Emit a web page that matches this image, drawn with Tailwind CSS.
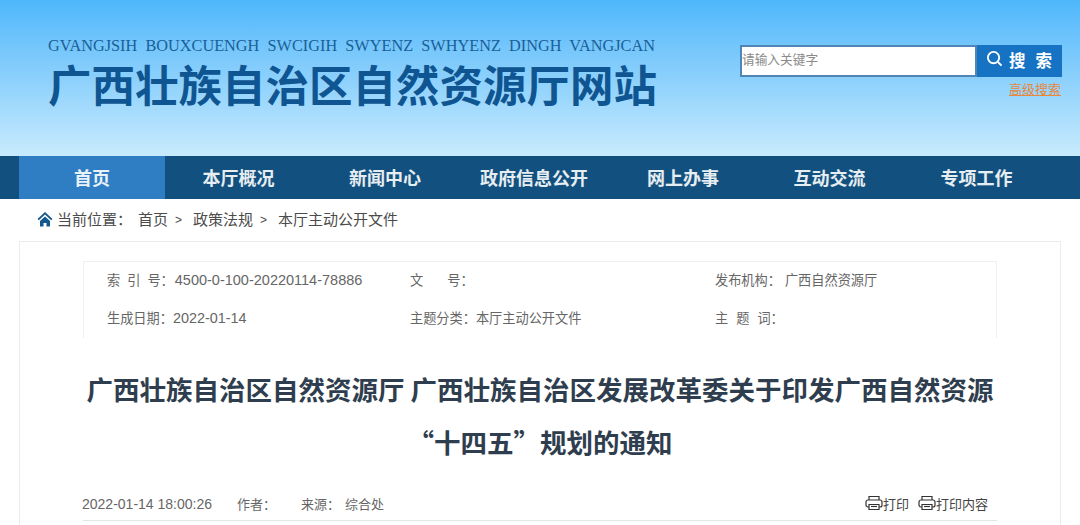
<!DOCTYPE html>
<html lang="zh-CN">
<head>
    <meta charset="UTF-8">
    <title>广西壮族自治区自然资源厅网站</title>
    <script src="https://cdn.jsdelivr.net/npm/@tailwindcss/browser@4"></script>
</head>
<body class="bg-white h-[525px] overflow-hidden font-['Liberation_Sans','Noto_Sans_CJK_SC',sans-serif]">

<!-- Banner -->
<header class="h-[156px] bg-gradient-to-b from-[#4db7fb] via-[#8bd0fc] to-[#c8ebfd] flex justify-between pl-[48px] pr-[19px]">
    <div class="pt-[37px]">
        <p class="w-[610px] h-[17px] leading-[17px] text-[16.3px] text-[#1b5f97] whitespace-nowrap font-['Liberation_Serif',serif]">GVANGJSIH&nbsp; BOUXCUENGH&nbsp; SWCIGIH&nbsp; SWYENZ&nbsp; SWHYENZ&nbsp; DINGH&nbsp; VANGJCAN</p>
        <h1 class="mt-[8px] text-[43.5px] leading-[50px] font-bold text-[#0f5592] whitespace-nowrap">广西壮族自治区自然资源厅网站</h1>
    </div>
    <div class="pt-[45px] w-[321px] shrink-0">
        <div class="flex h-[32px]">
            <div class="w-[237px] shrink-0 bg-white border-2 border-[#4f86b5] flex items-center text-[12.7px] text-[#8a8a8a]">请输入关键字</div>
            <button class="flex-1 bg-[#1673c4] text-white flex items-center pl-[9px] gap-[6px] text-[16.5px] font-bold whitespace-nowrap">
                <svg class="w-[17px] h-[17px] -mt-[6px]" viewBox="0 0 18 18" fill="none" stroke="white" stroke-width="2"><circle cx="8" cy="8" r="6"/><path d="M12.500 12.500l4 4"/></svg>
                <span class="tracking-[10px]">搜索</span>
            </button>
        </div>
        <div class="text-right"><a class="text-[13px] leading-[18px] text-[#e8883a] underline">高级搜索</a></div>
    </div>
</header>

<!-- Nav -->
<nav class="h-[43px] overflow-hidden bg-[#12507f] pl-[19px] grid grid-cols-[146px_147px_146px_152px_146px_147px_147px] justify-start text-[18px] font-bold text-white/90 text-center leading-[47px]">
    <a class="bg-[#2f7dc2]">首页</a>
    <a>本厅概况</a>
    <a>新闻中心</a>
    <a>政府信息公开</a>
    <a>网上办事</a>
    <a>互动交流</a>
    <a>专项工作</a>
</nav>

<!-- Breadcrumb -->
<div class="h-[42px] pl-[37px] flex items-center text-[15px] text-[#4b4b4b] whitespace-nowrap">
    <svg class="w-[16px] h-[16px] -mt-[3px] mr-[4px]" viewBox="0 0 16 16" fill="#13598f"><path d="M8 1L0.5 8l1.300 1.300L8 3.600l6.200 5.700L15.500 8z"/><path d="M3 10l5-4.500 5 4.500v5.500H9.500v-3.500h-3v3.500H3z"/></svg>
    <span class="w-[81px]">当前位置：</span>
    <span>首页</span><span class="ml-[7px] text-[12px]">&gt;</span>
    <span class="ml-[11px]">政策法规</span><span class="ml-[7px] text-[12px]">&gt;</span>
    <span class="ml-[11px]">本厅主动公开文件</span>
</div>

<!-- Article card -->
<main class="mx-[19px] border border-[#ececec] h-[300px] pt-[19px] px-[63px]">
    <div class="h-[77px] border-t border-x border-[#efefef] grid grid-cols-[303px_305px_1fr] grid-rows-2 pl-[23px] text-[13.2px] text-[#666] items-center whitespace-nowrap">
        <div>索<span class="ml-[7px]">引</span><span class="ml-[7px]">号</span>：<span class="ml-px text-[14.5px]">4500-0-100-20220114-78886</span></div>
        <div>文<span class="ml-[24px]">号</span>：</div>
        <div>发布机构：<span class="ml-[4px]">广西自然资源厅</span></div>
        <div>生成日期：<span class="text-[14.4px]">2022-01-14</span></div>
        <div>主题分类：本厅主动公开文件</div>
        <div>主<span class="ml-[8px]">题</span><span class="ml-[8px]">词</span>：</div>
    </div>

    <h2 class="mt-[24px] text-center text-[26.5px] leading-[53px] font-bold text-[#2f3e4e] -mx-2 whitespace-nowrap font-['Noto_Sans_CJK_SC',sans-serif]">广西壮族自治区自然资源厅 广西壮族自治区发展改革委关于印发广西自然资源<br>“十四五”规划的通知</h2>

    <div class="mt-[21px] h-[32px] border-b border-[#e6e6e6] flex justify-between items-center text-[13px] text-[#666] whitespace-nowrap">
        <div class="flex items-center -ml-px">
            <span class="text-[14px] w-[155px]">2022-01-14 18:00:26</span>
            <span class="w-[64px]">作者：</span>
            <span>来源：</span>
            <span class="ml-[5px]">综合处</span>
        </div>
        <div class="flex items-center text-[13px] text-[#444] pr-[9px]">
            <svg class="w-[18px] h-[16px] -mt-[4px]" viewBox="0 0 18 16" fill="none" stroke="#333" stroke-width="1.200"><path d="M4 5V1.500h10V5"/><rect x="1" y="5" width="16" height="7" rx="2"/><path d="M4 9.500h10v5H4z" fill="white"/><path d="M6 11.500h6"/></svg>
            <span>打印</span>
            <svg class="ml-[9px] w-[18px] h-[16px] -mt-[4px]" viewBox="0 0 18 16" fill="none" stroke="#333" stroke-width="1.200"><path d="M4 5V1.500h10V5"/><rect x="1" y="5" width="16" height="7" rx="2"/><path d="M4 9.500h10v5H4z" fill="white"/><path d="M6 11.500h6"/></svg>
            <span>打印内容</span>
        </div>
    </div>
</main>

</body>
</html>
